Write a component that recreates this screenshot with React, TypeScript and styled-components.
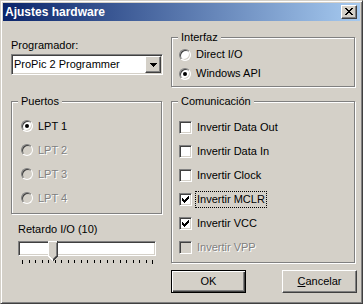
import React from 'react';
import styled, { createGlobalStyle, css } from 'styled-components';

const face = '#d4d0c8';
const shadow = '#808080';
const dark = '#404040';

const GlobalStyle = createGlobalStyle`
  html, body {
    margin: 0;
    padding: 0;
    background: ${face};
  }
  body {
    font-family: "Liberation Sans", Arial, sans-serif;
    font-size: 11px;
    color: #000;
  }
`;

const Window = styled.div`
  box-sizing: border-box;
  width: 363px;
  height: 304px;
  display: flex;
  flex-direction: column;
  padding: 2px;
  background: ${face};
  border: 1px solid;
  border-color: ${face} ${dark} ${dark} ${face};
  box-shadow: inset 1px 1px #fff, inset -1px -1px ${shadow};
`;

const TitleBar = styled.div`
  height: 18px;
  flex: none;
  display: flex;
  align-items: center;
  justify-content: space-between;
  padding: 0 3px 0 2px;
  background: linear-gradient(to right, #0a246a, #a6caf0);
`;

const Title = styled.span`
  color: #fff;
  font-weight: bold;
  font-size: 12px;
  line-height: 18px;
`;

const raised = css`
  border: 1px solid;
  border-color: #fff ${dark} ${dark} #fff;
  box-shadow: inset -1px -1px ${shadow};
  background: ${face};
`;

const CloseButton = styled.div`
  ${raised};
  box-sizing: border-box;
  width: 16px;
  height: 14px;
  display: flex;
  align-items: center;
  justify-content: center;
  padding: 0 1px 1px 0;
`;

const Client = styled.div`
  flex: 1;
  display: grid;
  grid-template-columns: 152px 186px;
  column-gap: 8px;
  padding-left: 8px;
  align-items: start;
`;

const Column = styled.div<{ $top: number }>`
  display: flex;
  flex-direction: column;
  padding-top: ${p => p.$top}px;
`;

const Label = styled.div<{ $indent?: number; $gap?: number }>`
  line-height: 13px;
  padding-left: ${p => p.$indent ?? 0}px;
  margin-top: ${p => p.$gap ?? 0}px;
  white-space: nowrap;
`;

const sunken = css`
  border: 1px solid;
  border-color: ${shadow} #fff #fff ${shadow};
  box-shadow: inset 1px 1px ${dark}, inset -1px -1px ${face};
`;

const Combo = styled.div`
  ${sunken};
  box-sizing: border-box;
  margin-top: 2px;
  height: 21px;
  display: flex;
  align-items: center;
  padding: 1px 1px 1px 2px;
  background: #fff;
`;

const ComboText = styled.span`
  flex: 1;
  line-height: 13px;
  white-space: nowrap;
`;

const DropButton = styled.div`
  ${raised};
  box-sizing: border-box;
  width: 16px;
  height: 17px;
  display: flex;
  align-items: center;
  justify-content: center;
`;

const Frame = styled.div<{ $h: number; $gap: number; $pad: [number, number]; $right?: number }>`
  position: relative;
  box-sizing: border-box;
  height: ${p => p.$h}px;
  margin-top: ${p => p.$gap}px;
  margin-right: ${p => p.$right ?? 1}px;
  padding: ${p => p.$pad[0]}px 0 0 ${p => p.$pad[1]}px;
  border: 1px solid ${shadow};
  box-shadow: inset 1px 1px #fff, 1px 1px #fff;
  display: flex;
  flex-direction: column;
`;

const Legend = styled.span`
  position: absolute;
  top: -7px;
  left: 6px;
  padding: 0 3px;
  line-height: 13px;
  background: ${face};
`;

const OptionRow = styled.div<{ $h: number; $disabled?: boolean }>`
  display: flex;
  align-items: center;
  gap: 5px;
  height: ${p => p.$h}px;
  white-space: nowrap;
  line-height: 13px;
  color: ${p => (p.$disabled ? shadow : '#000')};
  text-shadow: ${p => (p.$disabled ? '1px 1px #fff' : 'none')};
`;

const RadioCircle = styled.span<{ $disabled?: boolean }>`
  box-sizing: border-box;
  flex: none;
  width: 12px;
  height: 12px;
  border-radius: 50%;
  border: 1px solid;
  border-color: ${shadow} #fff #fff ${shadow};
  box-shadow: inset 1px 1px ${dark}, inset -1px -1px ${face};
  background: ${p => (p.$disabled ? face : '#fff')};
  display: flex;
  align-items: center;
  justify-content: center;
`;

const RadioDot = styled.span`
  width: 4px;
  height: 4px;
  border-radius: 50%;
  background: #000;
`;

const CheckBox = styled.span<{ $disabled?: boolean }>`
  ${sunken};
  box-sizing: border-box;
  flex: none;
  width: 13px;
  height: 13px;
  background: ${p => (p.$disabled ? face : '#fff')};
  display: flex;
  align-items: center;
  justify-content: center;
`;

const Focus = styled.span`
  outline: 1px dotted #000;
  outline-offset: 1px;
`;

const SliderArea = styled.div`
  margin: 5px 0 0 7px;
  width: 138px;
  display: flex;
  flex-direction: column;
`;

const Track = styled.div`
  ${sunken};
  position: relative;
  box-sizing: border-box;
  height: 15px;
  background: #fff;
`;

const Thumb = styled.svg`
  position: absolute;
  left: 29px;
  top: -1px;
`;

const Ticks = styled.div`
  display: flex;
  justify-content: space-between;
  align-items: flex-start;
  margin: 4px 3px 0 4px;
`;

const Tick = styled.span<{ $long?: boolean }>`
  width: 1px;
  height: ${p => (p.$long ? 4 : 3)}px;
  background: #000;
`;

const ButtonRow = styled.div`
  display: flex;
  justify-content: space-between;
  margin: 7px 0 0;
`;

const Button = styled.div<{ $default?: boolean }>`
  ${raised};
  box-sizing: border-box;
  width: 75px;
  height: 23px;
  display: flex;
  align-items: center;
  justify-content: center;
  line-height: 13px;
  ${p =>
    p.$default &&
    css`
      border-color: #000;
      box-shadow: inset 1px 1px #fff, inset -1px -1px ${dark}, inset -2px -2px ${shadow};
    `}
`;

const CloseGlyph = () => {
  const rows: [number, number][][] = [
    [[0, 2], [6, 2]],
    [[1, 2], [5, 2]],
    [[2, 4]],
    [[3, 2]],
    [[2, 4]],
    [[1, 2], [5, 2]],
    [[0, 2], [6, 2]],
  ];
  const d = rows
    .map((segs, y) => segs.map(([x, w]) => `M${x} ${y}h${w}v1h-${w}z`).join(''))
    .join('');
  return (
    <svg width="8" height="7" viewBox="0 0 8 7" shapeRendering="crispEdges">
      <path d={d} fill="#000" />
    </svg>
  );
};

const Arrow = () => (
  <svg width="7" height="4" viewBox="0 0 7 4" shapeRendering="crispEdges">
    <path d="M0 0h7v1h-7zM1 1h5v1h-5zM2 2h3v1h-3zM3 3h1v1h-1z" fill="#000" />
  </svg>
);

const CheckMark = ({ color }: { color: string }) => {
  const starts = [2, 3, 4, 3, 2, 1, 0];
  const d = starts.map((y, x) => `M${x} ${y}h1v3h-1z`).join('');
  return (
    <svg width="7" height="7" viewBox="0 0 7 7" shapeRendering="crispEdges">
      <path d={d} fill={color} />
    </svg>
  );
};

const Radio = ({ label, checked, disabled, h }: { label: string; checked?: boolean; disabled?: boolean; h: number }) => (
  <OptionRow $h={h} $disabled={disabled}>
    <RadioCircle $disabled={disabled}>{checked && <RadioDot />}</RadioCircle>
    <span>{label}</span>
  </OptionRow>
);

const Check = ({ label, checked, disabled, focused }: { label: string; checked?: boolean; disabled?: boolean; focused?: boolean }) => (
  <OptionRow $h={24} $disabled={disabled}>
    <CheckBox $disabled={disabled}>{checked && <CheckMark color="#000" />}</CheckBox>
    {focused ? <Focus>{label}</Focus> : <span>{label}</span>}
  </OptionRow>
);

const ports = ['LPT 1', 'LPT 2', 'LPT 3', 'LPT 4'];

const signals = [
  { label: 'Invertir Data Out' },
  { label: 'Invertir Data In' },
  { label: 'Invertir Clock' },
  { label: 'Invertir MCLR', checked: true, focused: true },
  { label: 'Invertir VCC', checked: true },
  { label: 'Invertir VPP', disabled: true },
];

export default function App() {
  return (
    <>
      <GlobalStyle />
      <Window>
        <TitleBar>
          <Title>Ajustes hardware</Title>
          <CloseButton>
            <CloseGlyph />
          </CloseButton>
        </TitleBar>
        <Client>
          <Column $top={18}>
            <Label>Programador:</Label>
            <Combo>
              <ComboText>ProPic 2 Programmer</ComboText>
              <DropButton>
                <Arrow />
              </DropButton>
            </Combo>
            <Frame $h={113} $gap={26} $pad={[12, 9]} $right={1}>
              <Legend>Puertos</Legend>
              {ports.map((p, i) => (
                <Radio key={p} label={p} h={24} checked={i === 0} disabled={i > 0} />
              ))}
            </Frame>
            <Label $indent={7} $gap={9}>Retardo I/O (10)</Label>
            <SliderArea>
              <Track>
                <Thumb width="10" height="20" viewBox="0 0 10 20" shapeRendering="crispEdges">
                  <path d="M0 0H10V15L5 20L0 15Z" fill={face} />
                  <path d="M0.5 15V0.5H9.5" stroke="#fff" fill="none" />
                  <path d="M0.5 15L5 19.5" stroke="#fff" fill="none" />
                  <path d="M9.5 0V15L5 19.5" stroke={dark} fill="none" />
                  <path d="M8.5 1.5V14.6L5 18.3" stroke={shadow} fill="none" />
                </Thumb>
              </Track>
              <Ticks>
                {Array.from({ length: 21 }, (_, i) => (
                  <Tick key={i} $long={i === 0 || i === 20} />
                ))}
              </Ticks>
            </SliderArea>
          </Column>
          <Column $top={16}>
            <Frame $h={50} $gap={0} $pad={[7, 7]} $right={2}>
              <Legend>Interfaz</Legend>
              <Radio label="Direct I/O" h={19} />
              <Radio label="Windows API" h={19} checked />
            </Frame>
            <Frame $h={162} $gap={14} $pad={[13, 7]} $right={2}>
              <Legend>Comunicación</Legend>
              {signals.map(s => (
                <Check key={s.label} {...s} />
              ))}
            </Frame>
            <ButtonRow>
              <Button $default>OK</Button>
              <Button>
                <span>
                  <u>C</u>ancelar
                </span>
              </Button>
            </ButtonRow>
          </Column>
        </Client>
      </Window>
    </>
  );
}
